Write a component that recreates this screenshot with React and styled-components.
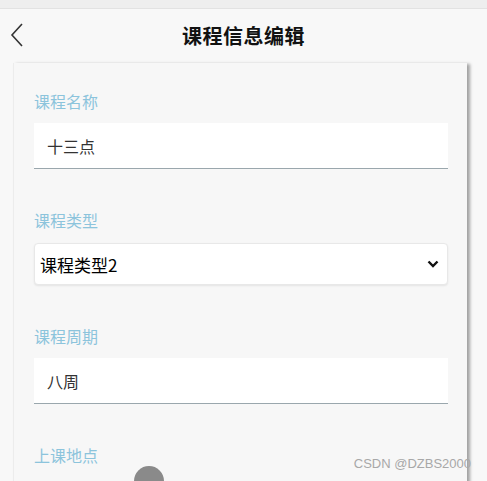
import React from 'react';
import styled, { createGlobalStyle } from 'styled-components';

const FIELDS = [
  { id: 1, label: '课程名称', type: 'text', value: '十三点' },
  { id: 2, label: '课程类型', type: 'select', value: '课程类型2' },
  { id: 3, label: '课程周期', type: 'text', value: '八周' },
];

const GlobalStyle = createGlobalStyle`
  * { box-sizing: border-box; }
  html, body {
    margin: 0;
    height: 100%;
    overflow: hidden;
    background: #f8f8f8;
    font-family: "Noto Sans CJK SC", "Noto Sans", sans-serif;
  }
`;

const App = () => {
  return (
    <Page>
      <GlobalStyle />
      <StatusStrip />
      <Header>
        <BackButton type="button" aria-label="back">
          <svg width="14" height="24" viewBox="0 0 14 24">
            <path d="M12 1 L2 12 L12 23" fill="none" stroke="#333" strokeWidth="1.6" />
          </svg>
        </BackButton>
        <Title>课程信息编辑</Title>
      </Header>

      <Card>
        {FIELDS.map((field) => (
          <Field key={field.id}>
            <Label>{field.label}</Label>
            {field.type === 'select' ? (
              <Select>
                <span>{field.value}</span>
                <svg width="12" height="8" viewBox="0 0 12 8">
                  <path d="M1.5 1.5 L6 6 L10.5 1.5" fill="none" stroke="#111" strokeWidth="2.4" />
                </svg>
              </Select>
            ) : (
              <TextInput type="text" value={field.value} readOnly />
            )}
          </Field>
        ))}
        <Field>
          <Label>上课地点</Label>
          <Knob />
        </Field>
      </Card>

      <Watermark>CSDN @DZBS2000</Watermark>
    </Page>
  );
};

export default App;

const Page = styled.div`
  position: relative;
  height: 481px;
  overflow: hidden;
`;

const StatusStrip = styled.div`
  height: 9px;
  background: #eeeeee;
  border-bottom: 1px solid #e2e2e2;
`;

const Header = styled.header`
  position: relative;
  display: flex;
  align-items: center;
  justify-content: center;
  height: 54px;
`;

const BackButton = styled.button`
  position: absolute;
  left: 10px;
  top: 14px;
  padding: 0;
  border: 0;
  background: none;
  display: flex;
`;

const Title = styled.h1`
  margin: 0 0 2px;
  font-size: 20px;
  font-weight: 700;
  color: #111;
  letter-spacing: 0.5px;
`;

const Card = styled.section`
  margin: 0 20px 0 13px;
  padding: 28px 19px 0 20px;
  height: 440px;
  background: #f7f7f7;
  border-left: 1px solid #ececec;
  box-shadow: 3px 1px 3px rgba(0, 0, 0, 0.35);
`;

const Field = styled.div`
  display: flex;
  flex-direction: column;
  margin-bottom: 41px;
`;

const Label = styled.label`
  font-size: 16px;
  line-height: 20px;
  color: #8cc4dc;
`;

const TextInput = styled.input`
  margin-top: 12px;
  height: 46px;
  padding: 0 13px;
  border: 0;
  border-bottom: 1px solid #9aa7ad;
  background: #fff;
  font-family: inherit;
  font-size: 16px;
  color: #333;
  outline: 0;
`;

const Select = styled.div`
  margin-top: 13px;
  height: 42px;
  display: flex;
  align-items: center;
  justify-content: space-between;
  padding: 0 8px 0 5px;
  background: #fff;
  border: 1px solid #e8e8e8;
  border-radius: 4px;
  box-shadow: 0 1px 2px rgba(0, 0, 0, 0.08);
  font-size: 17px;
  color: #000;
`;

const Knob = styled.div`
  margin: 1px 0 0 100px;
  width: 30px;
  height: 30px;
  border-radius: 50%;
  background: #8a8a8a;
`;

const Watermark = styled.div`
  position: absolute;
  right: 16px;
  bottom: 10px;
  font-family: "Liberation Sans", Arial, sans-serif;
  font-size: 13px;
  color: #a8a8a8;
`;
